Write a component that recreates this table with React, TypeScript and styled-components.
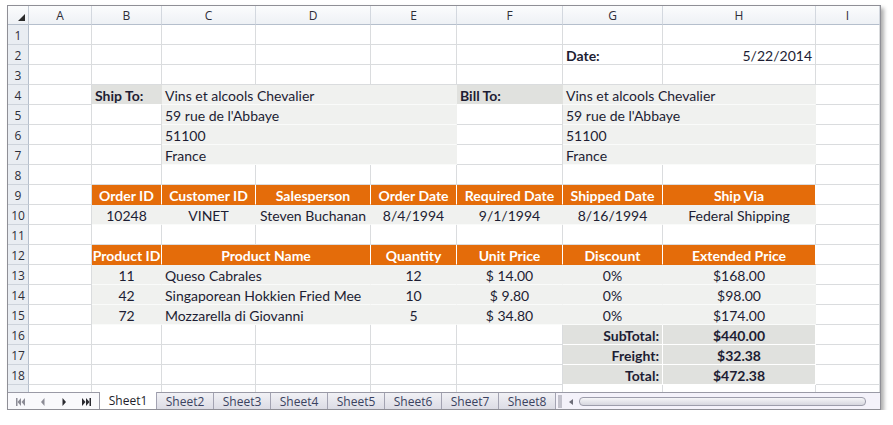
import React from 'react';
import styled, { createGlobalStyle, css } from 'styled-components';

const Global = createGlobalStyle`
  html, body { margin: 0; padding: 0; background: #ffffff; }
  body { font-family: Lato, "Liberation Sans", sans-serif; }
`;

const COLS = [21, 63, 70, 94, 115, 86, 106, 100, 153];
const GRID_COLS = COLS.map((c) => `${c}px`).join(' ') + ' 1fr';
const LETTERS = ['A', 'B', 'C', 'D', 'E', 'F', 'G', 'H', 'I'];

type Kind = 'plain' | 'fill' | 'label' | 'head' | 'total';
type Align = 'left' | 'center' | 'right';

interface CellSpec {
  span?: number;
  text?: string;
  kind?: Kind;
  align?: Align;
  bold?: boolean;
}

const GRID_LINE = '#dadcde';
const ORANGE = '#e46c0a';
const LIGHT = '#f0f1ef';
const DARK = '#e0e1de';

const Window = styled.div`
  margin: 5px 0 0 7px;
  width: 874px;
  height: 405px;
  box-sizing: border-box;
  border: 1px solid #8f8f96;
  box-shadow: 3px 3px 4px rgba(0, 0, 0, 0.32);
  display: flex;
  flex-direction: column;
  overflow: hidden;
  background: #ffffff;
`;

const Sheet = styled.div`
  display: grid;
  grid-template-columns: ${GRID_COLS};
  grid-template-rows: 19px repeat(18, 20px) 7px;
  flex: none;
`;

const Corner = styled.div`
  position: relative;
  background: linear-gradient(#fbfcfd, #eef1f5);
  border-right: 1px solid #c3cad4;
  border-bottom: 1px solid #b5bfcc;
  box-sizing: border-box;
  &::after {
    content: '';
    position: absolute;
    right: 3px;
    bottom: 3px;
    width: 0;
    height: 0;
    border-left: 7px solid transparent;
    border-bottom: 7px solid #2b2b2b;
  }
`;

const ColHeader = styled.div`
  background: linear-gradient(#fbfcfd, #eef1f5);
  border-right: 1px solid #d3d8df;
  border-bottom: 1px solid #b5bfcc;
  box-sizing: border-box;
  display: flex;
  align-items: center;
  justify-content: center;
  font-family: "Open Sans", "Noto Sans", sans-serif;
  font-size: 12px;
  color: #2e2e38;
`;

const RowHeader = styled.div<{ $partial?: boolean }>`
  background: #e9edf2;
  border-right: 1px solid #b5bfcc;
  border-bottom: ${(p) => (p.$partial ? 'none' : '1px solid #cdd3db')};
  box-sizing: border-box;
  display: flex;
  align-items: center;
  justify-content: center;
  font-family: "Open Sans", "Noto Sans", sans-serif;
  font-size: 12px;
  color: #2e2e38;
  padding-top: 1px;
`;

const kindStyles: Record<Kind, ReturnType<typeof css>> = {
  plain: css`
    background: #ffffff;
    border-right: 1px solid ${GRID_LINE};
    border-bottom: 1px solid ${GRID_LINE};
  `,
  fill: css`
    background: ${LIGHT};
    border-right: 1px solid ${LIGHT};
    border-bottom: 1px solid #fafbfa;
  `,
  label: css`
    background: ${DARK};
    border-right: 1px solid ${DARK};
    border-bottom: 1px solid #ffffff;
    font-weight: 700;
  `,
  head: css`
    background: ${ORANGE};
    border-right: 1px solid #ffffff;
    border-bottom: 1px solid ${ORANGE};
    color: #ffffff;
    font-weight: 700;
  `,
  total: css`
    background: ${DARK};
    border-right: 1px solid #ffffff;
    border-bottom: 1px solid #ffffff;
    font-weight: 700;
  `,
};

const Cell = styled.div<{ $kind: Kind; $align: Align; $span: number; $bold: boolean; $partial?: boolean }>`
  grid-column: span ${(p) => p.$span};
  box-sizing: border-box;
  display: flex;
  align-items: center;
  justify-content: ${(p) => (p.$align === 'left' ? 'flex-start' : p.$align === 'right' ? 'flex-end' : 'center')};
  padding: 1px 3px 0 3px;
  font-size: 14px;
  color: #1d1d33;
  white-space: nowrap;
  overflow: hidden;
  ${(p) => kindStyles[p.$kind]}
  ${(p) => p.$bold && css`font-weight: 700;`}
  ${(p) => p.$partial && css`border-bottom: none;`}
`;

const empty = (n: number): CellSpec[] => Array.from({ length: n }, () => ({}));

const ROWS: CellSpec[][] = [
  empty(9),
  [...empty(6), { text: 'Date:', bold: true, align: 'left' }, { text: '5/22/2014', align: 'right' }, {}],
  empty(9),
  [
    {},
    { text: 'Ship To:', kind: 'label', align: 'left' },
    { text: 'Vins et alcools Chevalier', kind: 'fill', span: 3, align: 'left' },
    { text: 'Bill To:', kind: 'label', align: 'left' },
    { text: 'Vins et alcools Chevalier', kind: 'fill', span: 2, align: 'left' },
    {},
  ],
  ...["59 rue de l'Abbaye", '51100', 'France'].map((t) => [
    {},
    {},
    { text: t, kind: 'fill' as Kind, span: 3, align: 'left' as Align },
    {},
    { text: t, kind: 'fill' as Kind, span: 2, align: 'left' as Align },
    {},
  ]),
  empty(9),
  [
    {},
    ...['Order ID', 'Customer ID', 'Salesperson', 'Order Date', 'Required Date', 'Shipped Date', 'Ship Via'].map(
      (t) => ({ text: t, kind: 'head' as Kind })
    ),
    {},
  ],
  [
    {},
    ...['10248', 'VINET', 'Steven Buchanan', '8/4/1994', '9/1/1994', '8/16/1994', 'Federal Shipping'].map((t) => ({
      text: t,
      kind: 'fill' as Kind,
    })),
    {},
  ],
  empty(9),
  [
    {},
    { text: 'Product ID', kind: 'head' },
    { text: 'Product Name', kind: 'head', span: 2 },
    { text: 'Quantity', kind: 'head' },
    { text: 'Unit Price', kind: 'head' },
    { text: 'Discount', kind: 'head' },
    { text: 'Extended Price', kind: 'head' },
    {},
  ],
  ...[
    ['11', 'Queso Cabrales', '12', '$ 14.00', '0%', '$168.00'],
    ['42', 'Singaporean Hokkien Fried Mee', '10', '$ 9.80', '0%', '$98.00'],
    ['72', 'Mozzarella di Giovanni', '5', '$ 34.80', '0%', '$174.00'],
  ].map((r) => [
    {},
    { text: r[0], kind: 'fill' as Kind },
    { text: r[1], kind: 'fill' as Kind, span: 2, align: 'left' as Align },
    { text: r[2], kind: 'fill' as Kind },
    { text: r[3], kind: 'fill' as Kind },
    { text: r[4], kind: 'fill' as Kind },
    { text: r[5], kind: 'fill' as Kind },
    {},
  ]),
  ...[
    ['SubTotal:', '$440.00'],
    ['Freight:', '$32.38'],
    ['Total:', '$472.38'],
  ].map((r) => [
    ...empty(6),
    { text: r[0], kind: 'total' as Kind, align: 'right' as Align },
    { text: r[1], kind: 'total' as Kind },
    {},
  ]),
];

const TabBar = styled.div`
  display: flex;
  height: 17px;
  border-top: 1px solid #9a9aa6;
  background: #f4f2fa;
  flex: none;
`;

const NavArea = styled.div`
  width: 92px;
  display: flex;
  align-items: center;
  justify-content: space-around;
  padding: 0 2px;
  box-sizing: border-box;
  background: #f9f9fc;
  border-right: 1px solid #9a9aa6;
`;

const NavBtn = styled.svg<{ $on?: boolean }>`
  width: 10px;
  height: 8px;
  fill: ${(p) => (p.$on ? '#2a2a30' : '#8c8c96')};
`;

const Tab = styled.div<{ $active?: boolean }>`
  width: 57px;
  box-sizing: border-box;
  display: flex;
  align-items: center;
  justify-content: center;
  font-family: "Open Sans", "Noto Sans", sans-serif;
  font-size: 12px;
  color: ${(p) => (p.$active ? '#1e1e2a' : '#3a4260')};
  border-right: 1px solid #a3a3b2;
  margin-top: ${(p) => (p.$active ? '-1px' : '0')};
  background: ${(p) => (p.$active ? '#ffffff' : 'linear-gradient(#f1f1f5, #dcdce5)')};
  border-bottom: 1px solid #a3a3b2;
`;

const Splitter = styled.div`
  width: 4px;
  margin: 2px 3px 2px 2px;
  background-image: radial-gradient(circle, #8a8a98 0.6px, transparent 0.8px);
  background-size: 2px 2px;
`;

const ScrollArea = styled.div`
  flex: 1;
  display: flex;
  align-items: center;
  padding: 0 14px 0 4px;
  gap: 6px;
`;

const Arrow = styled.div`
  width: 0;
  height: 0;
  border-top: 3px solid transparent;
  border-bottom: 3px solid transparent;
  border-right: 4px solid #6d6d78;
`;

const Thumb = styled.div`
  flex: 1;
  height: 7px;
  border: 1px solid #9d9dab;
  border-radius: 4px;
  background: linear-gradient(#f6f6f8, #d6d6de);
`;

export default function App() {
  return (
    <>
      <Global />
      <Window>
        <Sheet>
          <Corner />
          {LETTERS.map((l) => (
            <ColHeader key={l}>{l}</ColHeader>
          ))}
          {ROWS.map((row, ri) => (
            <React.Fragment key={ri}>
              <RowHeader>{ri + 1}</RowHeader>
              {row.map((c, ci) => (
                <Cell
                  key={ci}
                  $kind={c.kind ?? 'plain'}
                  $align={c.align ?? 'center'}
                  $span={c.span ?? 1}
                  $bold={!!c.bold}
                >
                  {c.text}
                </Cell>
              ))}
            </React.Fragment>
          ))}
          <RowHeader $partial />
          {LETTERS.map((l) => (
            <Cell key={l} $kind="plain" $align="center" $span={1} $bold={false} $partial />
          ))}
        </Sheet>
        <TabBar>
          <NavArea>
            <NavBtn viewBox="0 0 10 8">
              <rect x="0" y="0" width="1.5" height="8" />
              <path d="M5 0 L1.5 4 L5 8 Z M9 0 L5.5 4 L9 8 Z" />
            </NavBtn>
            <NavBtn viewBox="0 0 10 8">
              <path d="M6.5 0 L3 4 L6.5 8 Z" />
            </NavBtn>
            <NavBtn viewBox="0 0 10 8" $on>
              <path d="M3.5 0 L7 4 L3.5 8 Z" />
            </NavBtn>
            <NavBtn viewBox="0 0 10 8" $on>
              <path d="M1 0 L4.5 4 L1 8 Z M5 0 L8.5 4 L5 8 Z" />
              <rect x="8.5" y="0" width="1.5" height="8" />
            </NavBtn>
          </NavArea>
          {['Sheet1', 'Sheet2', 'Sheet3', 'Sheet4', 'Sheet5', 'Sheet6', 'Sheet7', 'Sheet8'].map((s, i) => (
            <Tab key={s} $active={i === 0}>
              {s}
            </Tab>
          ))}
          <Splitter />
          <ScrollArea>
            <Arrow />
            <Thumb />
          </ScrollArea>
        </TabBar>
      </Window>
    </>
  );
}
